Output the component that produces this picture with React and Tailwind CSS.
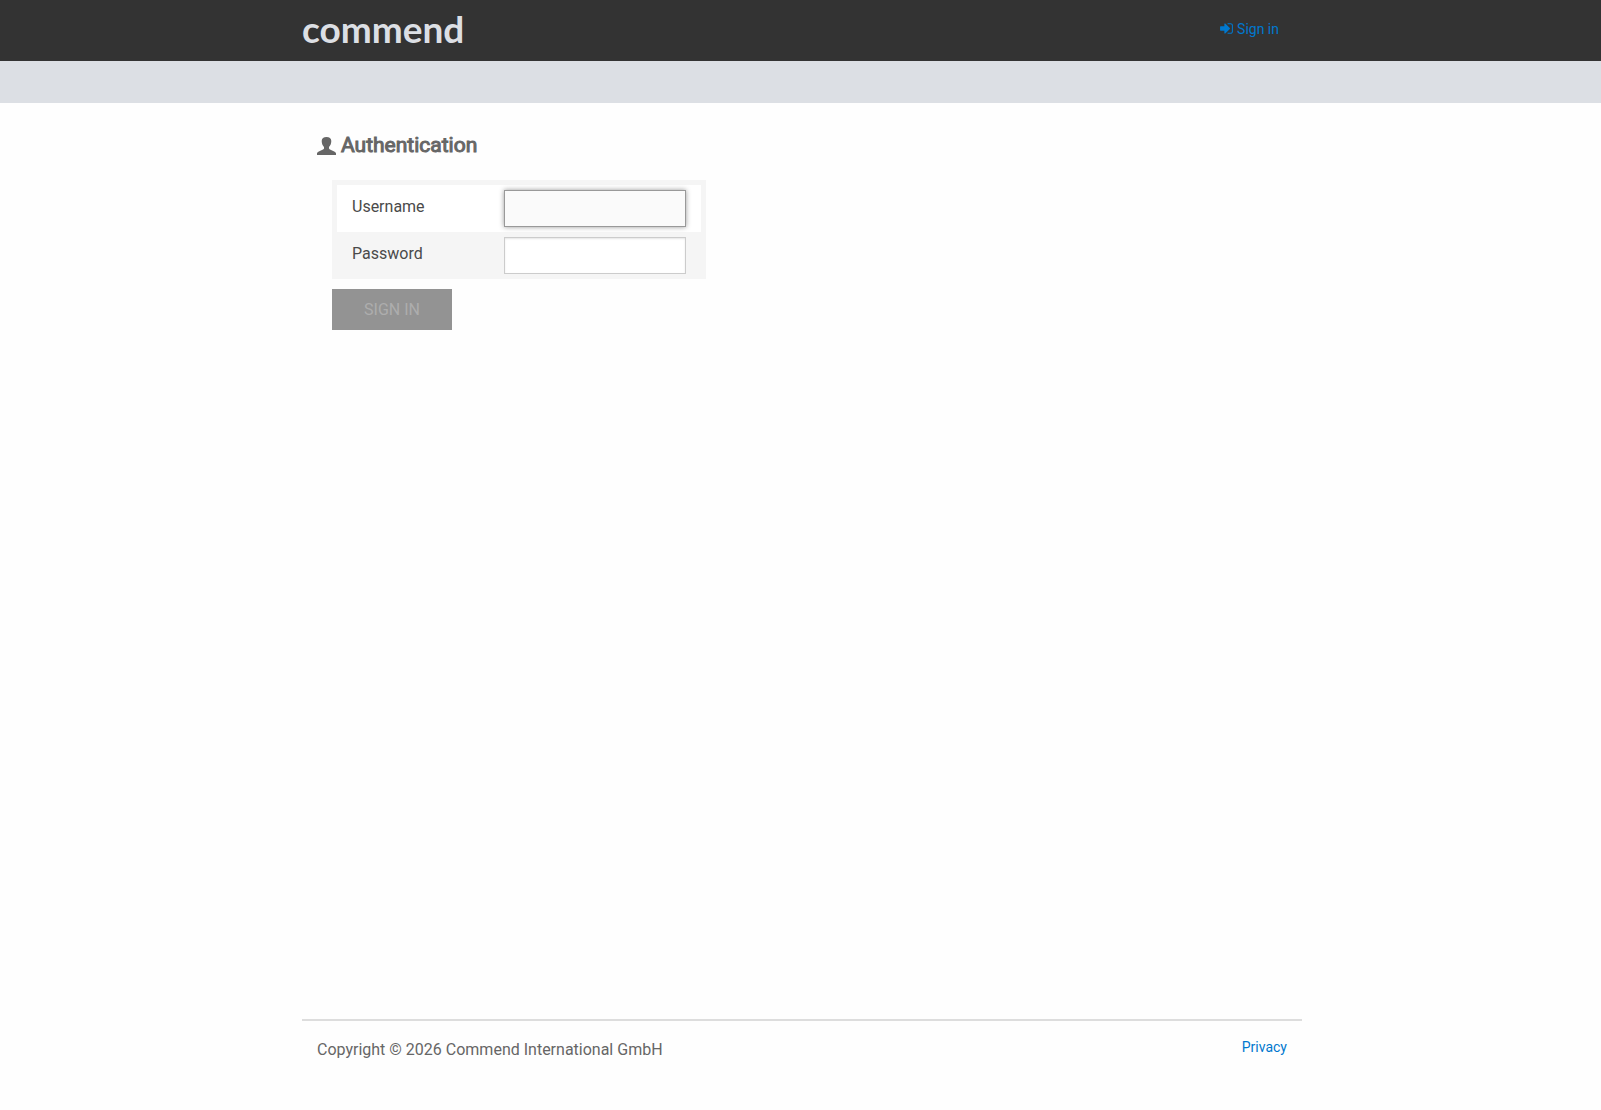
import { useState } from 'react';

const FIELDS = [
  { name: 'username', label: 'Username', type: 'text', autoComplete: 'username' },
  { name: 'password', label: 'Password', type: 'password', autoComplete: 'current-password' },
];

const SignInIcon = () => (
  <svg viewBox="0 0 1536 1792" fill="currentColor" className="h-[15px] w-[13px]" aria-hidden="true">
    <path d="M1184 896q0 26-19 45l-544 544q-19 19-45 19t-45-19-19-45v-288h-448q-26 0-45-19t-19-45v-384q0-26 19-45t45-19h448v-288q0-26 19-45t45-19 45 19l544 544q19 19 19 45zm352-352v704q0 119-84.500 203.500t-203.500 84.500h-320q-13 0-22.500-9.500t-9.500-22.500q0-4-1-20t-.5-26.500 3-23.500 10-19.500 20.500-6.500h320q66 0 113-47t47-113v-704q0-66-47-113t-113-47h-312l-11.500-1-11.500-3-8-5.500-7-9-2-13.500q0-4-1-20t-.5-26.500 3-23.500 10-19.500 20.500-6.500h320q119 0 203.500 84.500t84.500 203.500z" />
  </svg>
);

const UserIcon = () => (
  <svg viewBox="0 0 19 18" fill="currentColor" className="h-[18px] w-[19px]" aria-hidden="true">
    <path d="M9.500 0C12.400 0 14.300 1.500 14.300 4.100C14.300 6.600 13.400 8.700 12 10V11.300C12 12 12.400 12.300 13 12.600L17.200 14.400C18.400 14.900 19 15.600 19 16.500V18H0V16.500C0 15.600 .6 14.900 1.800 14.400L6 12.600C6.600 12.300 7 12 7 11.300V10C5.600 8.700 4.700 6.600 4.700 4.100C4.700 1.500 6.600 0 9.500 0Z" />
  </svg>
);

const Header = () => (
  <header>
    <div className="bg-[#333] pl-[3px]">
      <div className="mx-auto flex h-[61px] max-w-[1000px] items-center justify-between pr-[23px] pb-1">
        <a href="/" className="font-['Lato',sans-serif] text-[37px] leading-[56px] font-bold text-[#dcdfe4]">commend</a>
        <a href="/login" className="flex items-center gap-1 text-sm text-[#0078ce]">
          <SignInIcon />
          Sign in
        </a>
      </div>
    </div>
    <div className="h-[42px] bg-[#dcdfe4]" />
  </header>
);

const LoginForm = () => {
  const [form, setForm] = useState({ username: '', password: '' });
  const handleChange = (e) => setForm({ ...form, [e.target.name]: e.target.value });
  const incomplete = !form.username || !form.password;

  return (
    <form onSubmit={(e) => e.preventDefault()} className="flex flex-col items-start gap-2.5 px-[15px]">
      <div className="w-[374px] max-w-full bg-[#f5f5f5] px-[5px] pt-[5px]">
        {FIELDS.map((field) => (
          <div key={field.name} className="flex items-start justify-between px-[15px] py-[5px] first:bg-white">
            <label htmlFor={field.name} className="pt-[5px] leading-6 text-[#4a4a4a]">{field.label}</label>
            <input
              id={field.name}
              name={field.name}
              type={field.type}
              autoComplete={field.autoComplete}
              autoFocus={field.name === 'username'}
              value={form[field.name]}
              onChange={handleChange}
              className="h-[37px] w-[182px] border border-[#ccc] bg-white px-2 shadow-[inset_0_1px_2px_rgba(0,0,0,0.1)] outline-none focus:border-[#999] focus:bg-[#fafafa] focus:shadow-[0_0_5px_#999]"
            />
          </div>
        ))}
      </div>
      <button
        type="submit"
        disabled={incomplete}
        className="h-[41px] w-[120px] bg-[#333] text-white uppercase disabled:bg-[#939393] disabled:text-[#adadad]"
      >
        Sign in
      </button>
    </form>
  );
};

const Footer = () => (
  <footer className="pl-[3px]">
    <div className="mx-auto flex h-[91px] max-w-[1000px] items-start justify-between border-t-2 border-[#ddd] px-[15px] pt-4 text-[#666]">
      <p className="leading-[26px]">Copyright © 2026 Commend International GmbH</p>
      <a href="/privacy" className="text-sm text-[#0078ce]">Privacy</a>
    </div>
  </footer>
);

const App = () => (
  <div className="flex min-h-screen flex-col bg-[#fefefe] font-['Roboto',sans-serif] text-base">
    <Header />
    <main className="flex-1 pl-[3px]">
      <div className="mx-auto max-w-[1000px] px-[15px] pt-[27px]">
        <h1 className="mb-[19px] flex items-center gap-[5px] text-[21px] leading-[31px] font-normal text-[#666]">
          <UserIcon />
          <span className="[-webkit-text-stroke:1px_#666]">Authentication</span>
        </h1>
        <LoginForm />
      </div>
    </main>
    <Footer />
  </div>
);

export default App;
